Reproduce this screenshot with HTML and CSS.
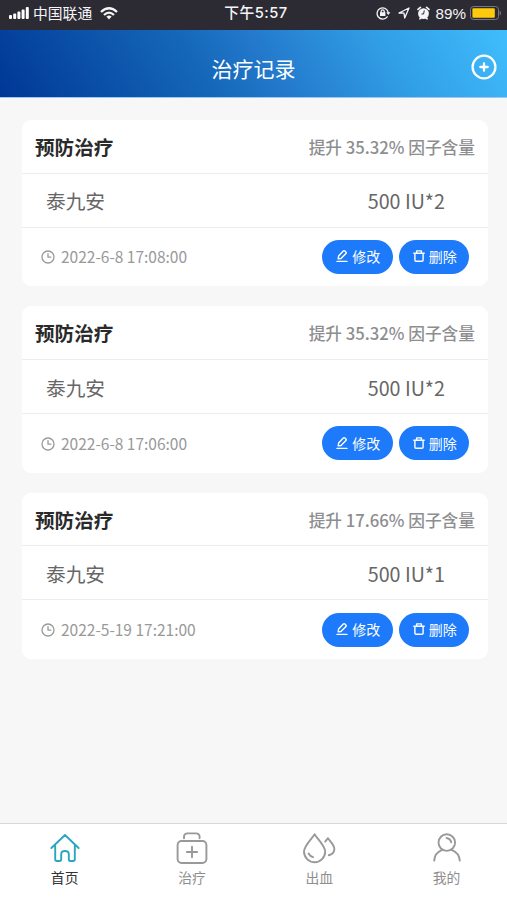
FILE: index.html
```html
<!DOCTYPE html>
<html lang="zh-CN">
<head>
<meta charset="utf-8">
<title>治疗记录</title>
<link rel="stylesheet" href="styles.css">
</head>
<body>
<svg class="sprite" aria-hidden="true">
  <symbol id="clock" viewBox="0 0 14 14"><circle cx="7" cy="7" r="6"/><path d="M7 3.7V7.2H9.8"/></symbol>
  <symbol id="edit" viewBox="0 0 14 14"><path d="M3.2 9.9 3.6 7.1 8.3 2.1Q9.1 1.3 9.9 2L10.9 2.9Q11.7 3.7 10.9 4.5L6 9.5ZM2 12.4H12"/></symbol>
  <symbol id="trash" viewBox="0 0 14 14"><path d="M1.8 4.2H12.2M4.6 4V1.9H9.4V4M2.9 4.3V11.2Q2.9 12.3 4 12.3H10Q11.1 12.3 11.1 11.2V4.3"/></symbol>
</svg>
<div class="status">
  <div class="carrier">
    <svg class="signal" width="20" height="12" viewBox="0 0 20 12"><rect x="0" y="8" width="3" height="4" rx="1"/><rect x="4.2" y="6.5" width="3" height="5.5" rx="1"/><rect x="8.4" y="4.5" width="3" height="7.5" rx="1"/><rect x="12.6" y="2.5" width="3" height="9.5" rx="1"/><rect x="16.8" y="0" width="3" height="12" rx="1"/></svg>
    <span>中国联通</span>
    <svg class="wifi" width="18" height="13" viewBox="0 0 18 13"><path d="M1 5Q9-2.4 17 5M4 8Q9 3.2 14 8"/><path class="solid" d="M6.4 9.6Q9 7.4 11.6 9.6L9 12.4Z"/></svg>
  </div>
  <div class="time">下午5:57</div>
  <div class="indicators">
    <svg class="lock" width="15" height="14" viewBox="0 0 15 14"><path d="M11.2 10.8A5.6 5.6 0 1 1 12.2 6.4"/><path class="solid" d="M10.3 6.2H14.4L12.3 9ZM4 6.2H9.4V10H4Z"/><path d="M5.2 6.4V5.2Q5.2 3.8 6.7 3.8T8.2 5.2V6.4"/></svg>
    <svg class="arrow" width="12" height="12" viewBox="0 0 12 12"><path d="M1 6 11 1 6.7 11 6 6.2Z"/></svg>
    <svg class="alarm" width="13" height="14" viewBox="0 0 13 14"><circle class="solid" cx="6.5" cy="7.6" r="5.4"/><path d="M1 3.4 3.4 1.4M12 3.4 9.6 1.4M3 12.8 4 11.6M10 12.8 9 11.6"/><path class="hands" d="M7.2 4.8 6.6 8 4.8 8"/></svg>
    <span class="percent">89%</span>
    <svg class="battery" width="31" height="14" viewBox="0 0 31 14"><rect class="shell" x=".5" y=".5" width="28" height="13" rx="3"/><rect class="charge" x="2.4" y="2.3" width="22.4" height="9.4" rx="1"/><path class="cap" d="M29.7 4.5Q31 5 31 7T29.7 9.5Z"/></svg>
  </div>
</div>
<header class="bar">
  <h1>治疗记录</h1>
  <svg class="add" width="26" height="26" viewBox="0 0 26 26"><circle cx="13" cy="13" r="11.4"/><path d="M13 9.3V16.7M9.3 13H16.7"/></svg>
</header>
<main class="records">
  <article class="card">
    <div class="top"><h2>预防治疗</h2><span class="gain">提升 35.32% 因子含量</span></div>
    <div class="drug"><span>泰九安</span><span class="dose">500 IU*2</span></div>
    <div class="foot">
      <svg class="clock"><use href="#clock"/></svg><time>2022-6-8 17:08:00</time>
      <button><svg><use href="#edit"/></svg>修改</button><button><svg><use href="#trash"/></svg>删除</button>
    </div>
  </article>
  <article class="card">
    <div class="top"><h2>预防治疗</h2><span class="gain">提升 35.32% 因子含量</span></div>
    <div class="drug"><span>泰九安</span><span class="dose">500 IU*2</span></div>
    <div class="foot">
      <svg class="clock"><use href="#clock"/></svg><time>2022-6-8 17:06:00</time>
      <button><svg><use href="#edit"/></svg>修改</button><button><svg><use href="#trash"/></svg>删除</button>
    </div>
  </article>
  <article class="card">
    <div class="top"><h2>预防治疗</h2><span class="gain">提升 17.66% 因子含量</span></div>
    <div class="drug"><span>泰九安</span><span class="dose">500 IU*1</span></div>
    <div class="foot">
      <svg class="clock"><use href="#clock"/></svg><time>2022-5-19 17:21:00</time>
      <button><svg><use href="#edit"/></svg>修改</button><button><svg><use href="#trash"/></svg>删除</button>
    </div>
  </article>
</main>
<nav class="tabs">
  <a class="tab active"><svg viewBox="0 0 34 34"><path d="M3.4 16 17 3 30.6 16M7.2 14V27.3Q7.2 29 9 29H11.6Q13.2 29 13.2 27.3V22Q13.2 19 17 19T20.8 22V27.3Q20.8 29 22.4 29H25Q26.8 29 26.8 27.3V14"/></svg>首页</a>
  <a class="tab"><svg viewBox="0 0 34 34"><rect x="2.6" y="9" width="28.8" height="22" rx="4"/><path d="M9 6.2V5Q9 1.4 12.6 1.4H21Q24.6 1.4 24.6 5V6.2M17 14.8V25.2M11.8 20H22.2"/></svg>治疗</a>
  <a class="tab"><svg viewBox="0 0 34 34"><path d="M12.6 2.2C9.6 7 2 14 2 19.6A10.6 10.6 0 0 0 23.2 19.6C23.2 14 15.6 7 12.6 2.2ZM6.6 21.5Q8 24.2 11 25.2M23.2 9.6 26 6.2C28.2 9.6 32.4 13 32.4 17.2Q32 22.2 26.8 23.2"/></svg>出血</a>
  <a class="tab"><svg viewBox="0 0 34 34"><circle cx="16.8" cy="10.6" r="8.3"/><path d="M16.6 6Q20.6 6.8 21.2 10.4M4.2 28.6Q4.6 20.8 12.2 17.8M21.6 17.8Q29.2 20.8 29.8 28.6"/></svg>我的</a>
</nav>
</body>
</html>
```
FILE: styles.css
```css
* { box-sizing: border-box; }
body {
  margin: 0;
  height: 900px;
  display: flex;
  flex-direction: column;
  overflow: hidden;
  background: #f7f7f8;
  font-family: "Noto Sans CJK SC", sans-serif;
  line-height: 1;
}
svg { flex: none; fill: none; stroke: currentColor; stroke-linecap: round; stroke-linejoin: round; }
h1, h2 { margin: 0; }
.sprite { position: absolute; width: 0; height: 0; }

.status {
  height: 30px;
  padding: 0 6px 3px 9px;
  display: grid;
  grid-template-columns: 1fr auto 1fr;
  align-items: center;
  background: #2c2b33;
  color: #f5f5f7;
  font-size: 14.8px;
}
.carrier, .indicators { display: flex; align-items: center; }
.indicators { justify-content: flex-end; }
.signal { margin-right: 4px; fill: #fff; stroke: none; }
.wifi { margin-left: 8px; stroke-width: 2.3; stroke-linecap: butt; }
.solid { fill: currentColor; stroke: none; }
.time { padding-left: 2px; font-family: Inter, "Noto Sans CJK SC", sans-serif; font-size: 14.7px; font-weight: 500; letter-spacing: .5px; }
.lock { stroke-width: 1.3; }
.arrow { margin-left: 7px; stroke-width: 1.3; }
.alarm { margin-left: 7px; stroke-width: 1.7; }
.hands { stroke: #2c2b33; stroke-width: 1; }
.percent { margin: 0 4px 0 6px; font-family: "Liberation Sans", sans-serif; font-size: 15.2px; }
.shell { stroke: #77767c; }
.charge { fill: #fdca0c; stroke: none; }
.cap { fill: #77767c; stroke: none; }

.bar {
  height: 68px;
  padding: 9px 10px 0;
  display: grid;
  grid-template-columns: 26px 1fr 26px;
  align-items: center;
  background: linear-gradient(58deg, #003796 0%, #1467b8 39%, #2378cb 52%, #319fe6 76%, #40bdfd 100%);
  border-bottom: 1px solid #9bc8ef;
  color: #fff;
}
.bar h1 { grid-column: 2; text-align: center; font-size: 21px; font-weight: 400; }
.add { stroke-width: 2.3; margin-top: -3px; }

.records { flex: 1; padding: 22px 19px 0 22px; display: flex; flex-direction: column; gap: 20px; }
.card { height: 166.4px; border-radius: 9px; background: #fff; }
.top, .drug, .foot { display: flex; align-items: center; }
.top, .drug { justify-content: space-between; border-bottom: 1px solid #ececec; }
.top { height: 53.5px; padding: 1px 13px 0; }
.top h2 { font-size: 19.6px; font-weight: 700; color: #2a2a2a; }
.gain { padding-top: 1px; font-size: 16.7px; font-weight: 500; color: #8e8e91; }
.drug { height: 54px; padding: 2px 43px 0 24px; font-size: 19.7px; color: #666; }
.foot { height: 58.9px; padding: 0 19px; color: #999; font-size: 15.5px; }
.clock { width: 14px; height: 14px; margin: 1px 6px 0 0; stroke-width: 1.3; }
.foot time { flex: 1; }
.foot button {
  width: 70.5px;
  height: 34px;
  margin-left: 6px;
  padding: 0 0 1px 1px;
  border: 0;
  border-radius: 17px;
  display: flex;
  align-items: center;
  justify-content: center;
  gap: 3px;
  background: #1c7afb;
  color: #fff;
  font: 400 14px/1 "Noto Sans CJK SC", sans-serif;
}
.foot button svg { width: 14px; height: 14px; stroke-width: 1.4; }

.tabs {
  height: 77px;
  padding: 8px 0 0 1px;
  display: grid;
  grid-template-columns: repeat(4, 127.3px);
  background: #fff;
  border-top: 1.5px solid #d8d8d8;
}
.tab { display: flex; flex-direction: column; align-items: center; gap: 5px; color: #8e8e8e; font-size: 13.8px; }
.tab svg { width: 34px; height: 34px; stroke: #999; stroke-width: 1.9; }
.tab.active { color: #333; }
.tab.active svg { stroke: #2ba6bf; }
```
